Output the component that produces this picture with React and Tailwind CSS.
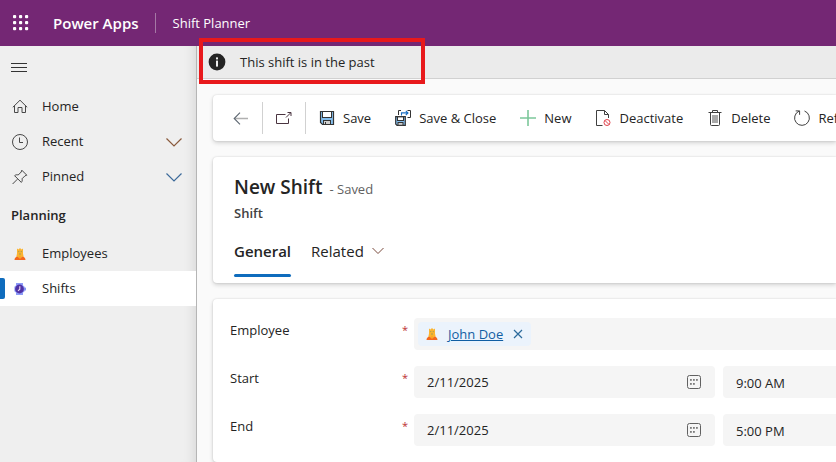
import React from "react";

function Svg({ size = 16, className = "", children, ...rest }) {
  return (
    <svg
      width={size}
      height={size}
      viewBox={`0 0 ${size} ${size}`}
      fill="none"
      stroke="currentColor"
      className={`shrink-0 ${className}`}
      aria-hidden="true"
      {...rest}
    >
      {children}
    </svg>
  );
}

const WaffleIcon = () => (
  <Svg fill="white" stroke="none">
    {[0, 6, 12].map((y) =>
      [0, 6, 12].map((x) => <rect key={`${x}-${y}`} x={x} y={y} width="3.2" height="3.2" rx="1" />)
    )}
  </Svg>
);

const MenuIcon = () => (
  <Svg shapeRendering="crispEdges">
    <path d="M0 3.5H16M0 7.5H16M0 11.5H16" />
  </Svg>
);

const HomeIcon = () => (
  <Svg>
    <path d="M0.8 8.3L8 1.2L15.2 8.3M2.5 6.8V13.5H6V8.5H10V13.5H13.5V6.8" />
  </Svg>
);

const ClockIcon = () => (
  <Svg>
    <circle cx="8" cy="8" r="7.5" />
    <path d="M7.5 3.5V8.5H11" />
  </Svg>
);

const PinIcon = () => (
  <Svg>
    <path d="M0.6 15L5.4 10.2M9.8 1.2L14.8 6.2L13 6.8L10 9.8C10.5 11.2 10.2 12.4 9.3 13.4L2.6 6.7C3.6 5.8 4.8 5.5 6.2 6L9.2 3Z" />
  </Svg>
);

const ChevronIcon = ({ className }) => (
  <Svg className={className}>
    <path d="M0.5 4.5L8 12L15.5 4.5" strokeWidth="1.2" />
  </Svg>
);

const SmallChevronIcon = () => (
  <Svg size={12} className="text-[#7a4a3c]">
    <path d="M0.5 3L6 8.5L11.5 3" />
  </Svg>
);

const PersonIcon = () => (
  <Svg size={12} stroke="none">
    <path d="M3 0.5L4.5 1.5L6 0L7.5 1.5L9 0.5V5.5L9.8 9.5H2.2L3 5.5Z" fill="#fbb430" />
    <path d="M0.5 12C0.5 10 1.6 9 3.4 8.8L6 10L8.6 8.8C10.4 9 11.5 10 11.5 12Z" fill="#f4681f" />
    <path d="M5 7.5H7V10.5H5Z" fill="#fca822" />
    <path d="M4.1 3.6H5.3M6.7 3.6H7.9M5 6H7" stroke="#8f9a5c" strokeWidth="0.8" />
  </Svg>
);

const WatchIcon = () => (
  <Svg size={12} stroke="none">
    <path d="M2 0H9V12H2Z" fill="#8c9bf7" />
    <rect x="0.4" y="2.6" width="10.2" height="6.8" rx="2" fill="#8c9bf7" />
    <rect x="10" y="4.5" width="2" height="3" rx="0.6" fill="#8494f5" />
    <circle cx="5.5" cy="6" r="4.4" fill="#4f32a6" />
    <path d="M5.8 3.2V6.2L4 7.8" stroke="#f3ddec" strokeWidth="1.1" />
  </Svg>
);

const InfoIcon = () => (
  <Svg size={18} stroke="none">
    <circle cx="9" cy="9" r="8.4" fill="#242424" />
    <rect x="8" y="4.4" width="2" height="2" fill="#eee" />
    <rect x="8" y="7.6" width="2" height="6" fill="#eee" />
  </Svg>
);

const BackIcon = () => (
  <Svg>
    <path d="M1.5 8.5H15" stroke="#b0b0b0" strokeWidth="1.6" />
    <path d="M7 2.7L1.2 8.5L7 14.3" stroke="#5c6670" strokeWidth="1.1" />
  </Svg>
);

const PopOutIcon = () => (
  <Svg className="text-[#4a3440]">
    <path d="M9.5 4.5H0.5V13.5H12.5V8.5M10 7.5L14.6 2.9M11.5 2.5H15V6" />
  </Svg>
);

const SaveIcon = () => (
  <Svg className="text-[#333]">
    <path d="M1.5 1.5H14.5V14.5H3.5L1.5 12.5Z" fill="#83bdec" strokeWidth="1.2" />
    <rect x="3.5" y="1.5" width="9" height="6" fill="white" />
    <rect x="4.5" y="10.5" width="7" height="4" fill="#d0d0d0" />
    <path d="M6.5 12V14.5" />
  </Svg>
);

const SaveCloseIcon = () => (
  <Svg className="text-[#333]">
    <path d="M3.5 5V0.5H6M12.5 0.5H15.5V7.5H12.5" />
    <path d="M6.5 5.5V2.9H12.5M10.8 0.8L13 2.9L10.8 5" stroke="#1a6fc4" strokeWidth="1.1" />
    <path d="M0.7 6.7H10.3V15.3H2L0.7 14Z" fill="#83bdec" strokeWidth="1.2" />
    <rect x="2.5" y="6.9" width="6" height="3.6" fill="white" />
    <rect x="3" y="12.5" width="5" height="2.8" fill="#d0d0d0" />
  </Svg>
);

const PlusIcon = () => (
  <Svg className="text-[#7cc79a]">
    <path d="M8 0V16M0 8H16" strokeWidth="1.6" />
  </Svg>
);

const DeactivateIcon = () => (
  <Svg className="text-[#404040]">
    <path d="M7.5 15.5H1.5V0.5H9.5L13.5 4.5V8M9.5 0.5V4.5H13.5" />
    <g stroke="#e0434c">
      <circle cx="12" cy="12.5" r="3" />
      <path d="M9.9 10.4L14.1 14.6" />
    </g>
  </Svg>
);

const DeleteIcon = () => (
  <Svg className="text-[#404040]">
    <path d="M1.5 2.5H14.5M5.5 2.5V0.5H10.5V2.5M3.5 2.5V14.5Q3.5 15.5 4.5 15.5H11.5Q12.5 15.5 12.5 14.5V2.5" />
    <path d="M6 5V13M8 5V13M10 5V13" strokeWidth="0.9" />
  </Svg>
);

const RefreshIcon = () => (
  <Svg className="text-[#404040]">
    <path d="M10.5 1A7.4 7.4 0 1 1 5.2 1.1M1.7 0.9H5.6V4.8" />
  </Svg>
);

const CalendarIcon = () => (
  <Svg size={14} className="text-[#616161]">
    <rect x="0.5" y="0.5" width="13" height="13" rx="2" />
    <g fill="#7c7c7c" stroke="none">
      <rect x="3" y="4" width="1.8" height="1.8" />
      <rect x="6" y="4" width="1.8" height="1.8" />
      <rect x="9" y="4" width="1.8" height="1.8" />
      <rect x="3" y="8" width="1.8" height="1.8" />
      <rect x="6" y="8" width="1.8" height="1.8" />
    </g>
  </Svg>
);

const CloseIcon = () => (
  <Svg size={10} className="text-[#2b6a9c]">
    <path d="M1 1L9 9M9 1L1 9" strokeWidth="1.2" />
  </Svg>
);

function NavItem({ icon, label, chevron, selected }) {
  return (
    <li>
      <button
        type="button"
        aria-current={selected ? "page" : undefined}
        className={`relative flex h-[35px] w-full items-center pr-3.5 pl-3 text-left ${selected ? "bg-white" : ""}`}
      >
        {selected && <span className="absolute top-[7px] left-0 h-[21px] w-[5px] rounded-r-xs bg-[#0f6cbd]" />}
        <span className="flex w-4 justify-center text-[#484848]">{icon}</span>
        <span className="ml-3.5 flex-1">{label}</span>
        {chevron && <ChevronIcon className={chevron} />}
      </button>
    </li>
  );
}

function Command({ icon, label }) {
  return (
    <button type="button" className="flex h-8 shrink-0 items-center gap-2 whitespace-nowrap">
      {icon}
      <span className="pt-0.5">{label}</span>
    </button>
  );
}

function FieldRow({ id, label, children }) {
  return (
    <div className="flex">
      <label htmlFor={id} className="flex w-[184px] shrink-0 justify-between pt-0.5 pr-1.5 leading-5">
        {label}
        <span className="text-[11px] text-[#bc2f32]">*</span>
      </label>
      {children}
    </div>
  );
}

function DateTimeField({ id, label, date, time }) {
  return (
    <FieldRow id={id} label={label}>
      <div className="flex h-8 w-[301px] shrink-0 items-center rounded bg-[#f5f5f5] pr-3.5 pl-[13px]">
        <input id={id} defaultValue={date} className="min-w-0 flex-1 bg-transparent pt-0.5 outline-none" />
        <button type="button" aria-label={`Choose ${label} date`}>
          <CalendarIcon />
        </button>
      </div>
      <input
        aria-label={`${label} time`}
        defaultValue={time}
        className="ml-2 h-8 min-w-0 flex-1 rounded-l bg-[#f5f5f5] pt-0.5 pl-[13px] outline-none"
      />
    </FieldRow>
  );
}

const cardClass = "rounded-l bg-white shadow-[0_0_2px_rgba(0,0,0,0.14),0_2px_4px_rgba(0,0,0,0.16)]";

export default function App() {
  return (
    <div className="relative flex h-screen flex-col overflow-hidden bg-[#fafafa] font-['Open_Sans','Noto_Sans',sans-serif] text-[13px] text-[#242424]">
      <header className="flex h-[46px] shrink-0 items-center bg-[#742774] pl-[13px] text-white">
        <button type="button" aria-label="App launcher">
          <WaffleIcon />
        </button>
        <a href="#" className="ml-6 text-[15px] font-semibold">
          Power Apps
        </a>
        <span className="mr-[17px] ml-4 h-5 w-px bg-[#a578a5]" />
        <span className="pt-0.5">Shift Planner</span>
      </header>

      <div className="flex min-h-0 flex-1">
        <nav className="w-[197px] shrink-0 border-r border-[#b5b5b5] bg-[#efefef] shadow-[inset_-12px_0_12px_-10px_rgba(0,0,0,0.1)]">
          <button type="button" aria-label="Menu" className="flex h-[43px] items-center pl-[11px] text-[#333]">
            <MenuIcon />
          </button>
          <ul>
            <NavItem icon={<HomeIcon />} label="Home" />
            <NavItem icon={<ClockIcon />} label="Recent" chevron="text-[#8a5a3c]" />
            <NavItem icon={<PinIcon />} label="Pinned" chevron="text-[#3c6a9a]" />
          </ul>
          <h2 className="flex h-[42px] items-center pt-0.5 pl-[11px] font-semibold">Planning</h2>
          <ul>
            <NavItem icon={<PersonIcon />} label="Employees" />
            <NavItem icon={<WatchIcon />} label="Shifts" selected />
          </ul>
        </nav>

        <main className="flex min-w-0 flex-1 flex-col">
          <div role="status" className="flex h-[33px] shrink-0 items-center gap-3.5 border-b border-[#d1d1d1] bg-[#ebebeb] pl-[11px]">
            <InfoIcon />
            <span className="pt-0.5">This shift is in the past</span>
          </div>

          <div className="flex min-h-0 flex-1 flex-col gap-4 overflow-hidden pt-4 pl-4">
            <div className={`flex h-[46px] shrink-0 items-center overflow-hidden ${cardClass}`}>
              <button type="button" aria-label="Back" className="flex h-8 w-[49px] shrink-0 items-center justify-center pl-1.5">
                <BackIcon />
              </button>
              <button
                type="button"
                aria-label="Open in new window"
                className="flex h-8 w-11 shrink-0 items-center justify-center border-x border-[#d1d1d1]"
              >
                <PopOutIcon />
              </button>
              <div className="flex gap-6 pl-[13px]">
                <Command icon={<SaveIcon />} label="Save" />
                <Command icon={<SaveCloseIcon />} label="Save &amp; Close" />
                <Command icon={<PlusIcon />} label="New" />
                <Command icon={<DeactivateIcon />} label="Deactivate" />
                <Command icon={<DeleteIcon />} label="Delete" />
                <Command icon={<RefreshIcon />} label="Refresh" />
              </div>
            </div>

            <section className={`flex h-[126px] shrink-0 flex-col pt-4 pl-[21px] ${cardClass}`}>
              <div className="flex items-baseline gap-[7px]">
                <h1 className="text-[19px] leading-7 font-semibold">New Shift</h1>
                <span className="text-[#616161]">- Saved</span>
              </div>
              <p className="leading-6 font-semibold text-[#424242]">Shift</p>
              <div role="tablist" className="mt-3 flex gap-5 text-[15px]">
                <button
                  type="button"
                  role="tab"
                  aria-selected="true"
                  className="relative flex h-10 items-center pb-3 font-semibold"
                >
                  General
                  <span className="absolute inset-x-0 bottom-0 h-[3px] rounded-full bg-[#0f6cbd]" />
                </button>
                <button type="button" role="tab" aria-selected="false" className="flex h-10 items-center gap-2 pb-3">
                  Related
                  <SmallChevronIcon />
                </button>
              </div>
            </section>

            <form className={`flex flex-1 flex-col gap-4 pt-[19px] pl-[17px] ${cardClass}`}>
              <FieldRow id="employee" label="Employee">
                <div className="flex h-8 min-w-0 flex-1 items-center rounded-l bg-[#f5f5f5] pl-1">
                  <span className="flex h-6 items-center rounded bg-[#ebf3fc] px-2">
                    <PersonIcon />
                    <a href="#" className="ml-2.5 pt-px text-[#115ea3] underline">
                      John Doe
                    </a>
                    <button type="button" aria-label="Remove John Doe" className="ml-2.5">
                      <CloseIcon />
                    </button>
                  </span>
                  <input id="employee" className="min-w-0 flex-1 bg-transparent outline-none" />
                </div>
              </FieldRow>
              <DateTimeField id="start" label="Start" date="2/11/2025" time="9:00 AM" />
              <DateTimeField id="end" label="End" date="2/11/2025" time="5:00 PM" />
            </form>
          </div>
        </main>
      </div>

      <div className="pointer-events-none absolute top-[38px] left-[199px] h-[46px] w-[226px] border-4 border-[#e8191c]" />
    </div>
  );
}
